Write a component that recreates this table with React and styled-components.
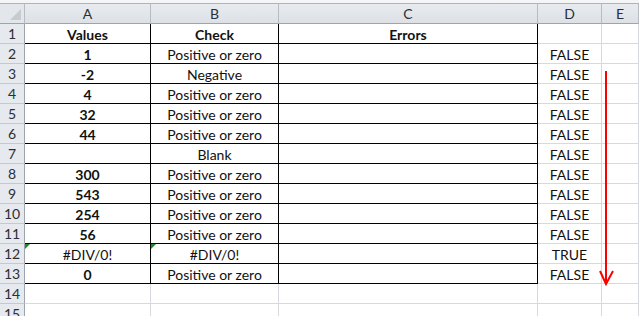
import styled, { createGlobalStyle } from 'styled-components';

const GlobalStyle = createGlobalStyle`
  * { box-sizing: border-box; }
  html, body { margin: 0; padding: 0; background: #fff; }
  body { font-family: Lato, "Open Sans", sans-serif; overflow: hidden; }
`;

const Page = styled.div`
  position: relative;
  width: 639px;
  height: 316px;
  padding-top: 3px;
  background: #f4f5f7;
  overflow: hidden;
`;

const Sheet = styled.div`
  display: grid;
  grid-template-columns: 25px 126px 128px 259px 64px 1fr;
  grid-auto-rows: 20px;
  border-top: 1px solid #aeb4bc;
  background: #fff;
`;

const Corner = styled.div`
  position: relative;
  background: #e3e6ea;
  border-right: 1px solid #b7bcc3;
  border-bottom: 1px solid #9ea4ab;
  &::after {
    content: '';
    position: absolute;
    right: 3px;
    bottom: 3px;
    border-style: solid;
    border-width: 0 0 11px 11px;
    border-color: transparent transparent #c7cbd0 transparent;
  }
`;

const ColHead = styled.div`
  display: flex;
  align-items: center;
  justify-content: center;
  background: linear-gradient(#e8ebee, #dde1e6);
  border-right: 1px solid #b7bcc3;
  border-bottom: 1px solid #9ea4ab;
  font-size: 14px;
  color: #2a2f36;
`;

const RowHead = styled.div`
  display: flex;
  align-items: center;
  justify-content: center;
  background: #e6e9ed;
  border-right: 1px solid #9ea4ab;
  border-bottom: 1px solid #c4c9cf;
  font-size: 14px;
  color: #2a2f36;
`;

const Cell = styled.div`
  position: relative;
  display: flex;
  align-items: center;
  justify-content: center;
  padding-top: 1px;
  font-size: 14px;
  color: #111;
  font-weight: ${({ $bold }) => ($bold ? 700 : 400)};
  border-right: 1px solid ${({ $boxed }) => ($boxed ? '#000' : '#d6d9dd')};
  border-bottom: 1px solid ${({ $boxed }) => ($boxed ? '#000' : '#d6d9dd')};
  white-space: nowrap;
  ${({ $flag }) =>
    $flag &&
    `&::before {
      content: '';
      position: absolute;
      left: 0;
      top: 0;
      border-style: solid;
      border-width: 5px 5px 0 0;
      border-color: #1f8a2a transparent transparent transparent;
    }`}
`;

const Arrow = styled.svg`
  position: absolute;
  left: 598px;
  top: 68px;
`;

const rows = [
  ['Values', 'Check', 'Errors', ''],
  ['1', 'Positive or zero', '', 'FALSE'],
  ['-2', 'Negative', '', 'FALSE'],
  ['4', 'Positive or zero', '', 'FALSE'],
  ['32', 'Positive or zero', '', 'FALSE'],
  ['44', 'Positive or zero', '', 'FALSE'],
  ['', 'Blank', '', 'FALSE'],
  ['300', 'Positive or zero', '', 'FALSE'],
  ['543', 'Positive or zero', '', 'FALSE'],
  ['254', 'Positive or zero', '', 'FALSE'],
  ['56', 'Positive or zero', '', 'FALSE'],
  ['#DIV/0!', '#DIV/0!', '', 'TRUE'],
  ['0', 'Positive or zero', '', 'FALSE'],
  ['', '', '', ''],
  ['', '', '', ''],
];

const App = () => (
  <Page>
    <GlobalStyle />
    <Sheet>
      <Corner />
      {['A', 'B', 'C', 'D', 'E'].map((c) => (
        <ColHead key={c}>{c}</ColHead>
      ))}
      {rows.map((r, i) => {
        const boxed = i < 13;
        const isError = r[0] === '#DIV/0!';
        return [
          <RowHead key={`h${i}`}>{i + 1}</RowHead>,
          <Cell key={`a${i}`} $boxed={boxed} $bold={!isError && boxed} $flag={isError}>
            {r[0]}
          </Cell>,
          <Cell key={`b${i}`} $boxed={boxed} $bold={i === 0} $flag={isError}>
            {r[1]}
          </Cell>,
          <Cell key={`c${i}`} $boxed={boxed} $bold={i === 0}>
            {r[2]}
          </Cell>,
          <Cell key={`d${i}`}>{r[3]}</Cell>,
          <Cell key={`e${i}`} />,
        ];
      })}
    </Sheet>
    <Arrow width="18" height="220" viewBox="0 0 18 220">
      <path d="M8 3 V216" stroke="#f00" strokeWidth="2" fill="none" />
      <path d="M2 203 L8 216 L15 203" stroke="#f00" strokeWidth="2" fill="none" />
    </Arrow>
  </Page>
);

export default App;
